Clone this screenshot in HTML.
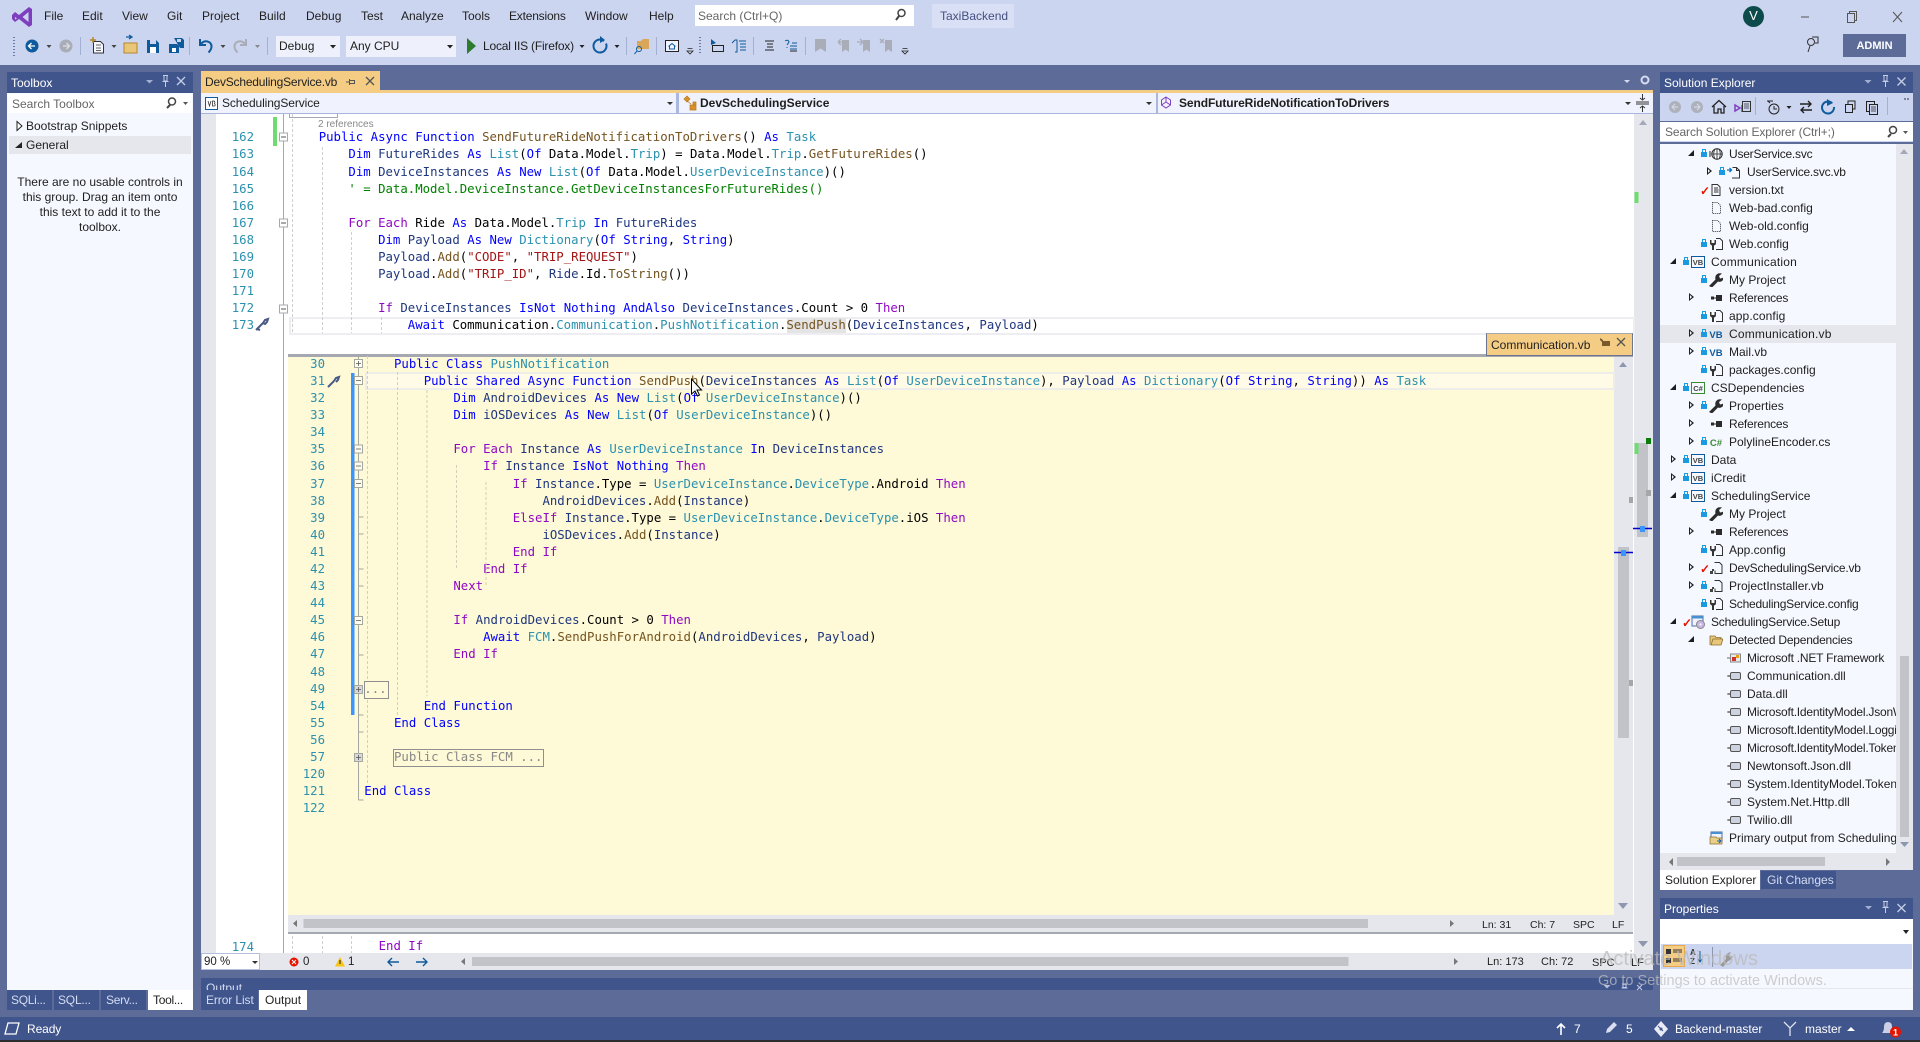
<!DOCTYPE html>
<html><head><meta charset="utf-8"><title>Visual Studio</title>
<style>
html,body{margin:0;padding:0;width:1920px;height:1042px;overflow:hidden;background:#5d6b99;font-family:"Liberation Sans",sans-serif;font-size:12px;color:#1e1e1e}
.a{position:absolute}
.t{position:absolute;white-space:nowrap;height:14px;line-height:14px}
pre{position:absolute;margin:0;font-family:"DejaVu Sans Mono",monospace;font-size:12.34px;line-height:17.1px;color:#000;white-space:pre}
pre.n{color:#2b91af;text-align:right}
.k{color:#0000ff}.c{color:#8f08c4}.y{color:#2b91af}.m{color:#74531f}.s{color:#a31515}.g{color:#008000}.v{color:#1f377f}
.w{color:#fff}
.r{position:relative;height:18px;--x:51px;white-space:nowrap}
.l1{--x:69px}.l2{--x:87px}
.r span{position:absolute;left:var(--x);top:0;line-height:18px;color:#1e1e1e}
.r span.n{letter-spacing:-.22px}
.r svg{position:absolute;left:calc(var(--x) - 20px);top:2px;width:14px;height:14px}
.r i{position:absolute;display:block}
.o{left:calc(var(--x) - 40px);top:4px;width:6px;height:9px}
.o::before{content:"";position:absolute;left:0;top:0;border-left:5px solid #1e1e1e;border-top:4.5px solid transparent;border-bottom:4.5px solid transparent}
.o::after{content:"";position:absolute;left:1px;top:2px;border-left:2.5px solid #f6f8ff;border-top:2.5px solid transparent;border-bottom:2.5px solid transparent}
.f{left:calc(var(--x) - 41px);top:5px;width:0;height:0;border-bottom:6px solid #1e1e1e;border-left:6px solid transparent}
.lk{left:calc(var(--x) - 28px);top:7px;width:6px;height:5px;background:#1a9ae0}
.lk::before{content:"";position:absolute;left:1px;top:-3px;width:2px;height:3px;border:1px solid #1a9ae0;border-bottom:0}
.ck{left:calc(var(--x) - 29px);top:4px;color:#e51400;font-size:12px;line-height:12px;font-style:normal;font-weight:bold}
.hl{background:#e6e7ed}
</style></head><body>
<svg width="0" height="0" style="position:absolute">
<symbol id="vbb" viewBox="0 0 14 14"><rect x=".5" y="1.5" width="13" height="11" fill="#f6f8ff" stroke="#0e5a9c"/><text x="7" y="10" font-size="7.5" font-weight="bold" text-anchor="middle" font-family="Liberation Sans" fill="#424242">VB</text></symbol>
<symbol id="csb" viewBox="0 0 14 14"><rect x=".5" y="1.5" width="13" height="11" fill="#f6f8ff" stroke="#388a34"/><text x="7" y="10" font-size="7.5" font-weight="bold" text-anchor="middle" font-family="Liberation Sans" fill="#424242">C#</text></symbol>
<symbol id="vb" viewBox="0 0 14 14"><text x="7" y="11" font-size="9.5" font-weight="bold" text-anchor="middle" font-family="Liberation Sans" fill="#0e5a9c">VB</text></symbol>
<symbol id="cs" viewBox="0 0 14 14"><text x="7" y="11" font-size="9.5" font-weight="bold" text-anchor="middle" font-family="Liberation Sans" fill="#388a34">C#</text></symbol>
<symbol id="cfg" viewBox="0 0 14 14"><path d="M7 1.500h4l2.500 2.500v8.500h-6.500" fill="none" stroke="#333"/><path d="M1 3v3q0 2 2 2.500v4.500h2v-4.500q2-.5 2-2.500v-3h-1.500v3h-3v-3z" fill="#333"/></symbol>
<symbol id="wr" viewBox="0 0 14 14"><path d="M0 13l6.500-6.500q-1-4 2.500-6q2-.5 4 0l-3 2.500l1 2.500l2.500-.5l1.500-2q.5 3-2 5q-2 1.500-4 .5l-6 6z" fill="#2b2b2b"/></symbol>
<symbol id="ref" viewBox="0 0 14 14"><rect x="2" y="5.500" width="3" height="3" fill="#2b2b2b"/><rect x="5" y="6.500" width="2" height="1" fill="#2b2b2b"/><rect x="7" y="4" width="6" height="6" fill="#2b2b2b"/></symbol>
<symbol id="glb" viewBox="0 0 14 14"><circle cx="8" cy="7" r="5.200" fill="none" stroke="#222"/><path d="M3 7h10M8 2v10M5.500 3q-1.500 4 0 8M10.500 3q1.500 4 0 8" fill="none" stroke="#222" stroke-width=".8"/><path d="M0 5h2M0 7h2M0 9h2" stroke="#222"/></symbol>
<symbol id="pg" viewBox="0 0 14 14"><path d="M3.500 1.500h5l3 3v8h-8z" fill="#f6f8ff" stroke="#333"/><path d="M8.500 1.500v3h3" fill="none" stroke="#333"/></symbol>
<symbol id="pgb" viewBox="0 0 14 14"><path d="M5.500 2.500h4l3 3v7.500h-7.500" fill="#f6f8ff" stroke="#333"/><path d="M0 5h4M2.500 3l2 2l-2 2" fill="none" stroke="#0e70c0" stroke-width="1.300"/><path d="M9.500 2.500v3h3" fill="none" stroke="#333"/></symbol>
<symbol id="txt" viewBox="0 0 14 14"><path d="M3 1.500h5.500l2.500 2.500v8.500h-8z" fill="#f6f8ff" stroke="#333"/><path d="M5 5h4M5 7h4.500M5 9h4.500" stroke="#333"/></symbol>
<symbol id="das" viewBox="0 0 14 14"><path d="M3.500 1.500h5l3 3v8h-8z" fill="none" stroke="#333" stroke-dasharray="1 1"/></symbol>
<symbol id="dsg" viewBox="0 0 14 14"><path d="M5.500 1.500h5l2.500 2.500v8.500h-7v-3" fill="#f6f8ff" stroke="#333"/><rect x="1" y="10" width="3" height="3" fill="#444"/><rect x="3" y="8" width="2" height="2" fill="#444"/></symbol>
<symbol id="dll" viewBox="0 0 14 14"><path d="M0 7h3" stroke="#666"/><rect x="3.500" y="3.500" width="10" height="7" rx="1.500" fill="#cdd3e0" stroke="#555"/><rect x="1" y="6" width="2" height="2" fill="#888"/></symbol>
<symbol id="net" viewBox="0 0 14 14"><path d="M0 7h3" stroke="#666"/><rect x="3.500" y="3" width="10" height="8" fill="#e8e8e8" stroke="#888"/><rect x="5" y="6" width="4" height="4" fill="#c33"/><rect x="9" y="4" width="3" height="3" fill="#e3a21a"/></symbol>
<symbol id="fld" viewBox="0 0 14 14"><path d="M1 12V3h5l1 1.500h5V6H4L2 12h10l2-6H4" fill="#e8c67a" stroke="#8a6d2d" stroke-width=".8"/></symbol>
<symbol id="set" viewBox="0 0 14 14"><rect x="1" y="1" width="11" height="10" fill="#f0f3ff" stroke="#4a6fa5"/><rect x="1" y="1" width="11" height="2.500" fill="#4a8fd0"/><circle cx="9.500" cy="9.500" r="4" fill="#c9b6e4" stroke="#888"/><circle cx="9.500" cy="9.500" r="1" fill="#fff"/></symbol>
<symbol id="pri" viewBox="0 0 14 14"><rect x="2" y="1" width="11" height="9" fill="#f0f3ff" stroke="#4a6fa5"/><rect x="2" y="1" width="11" height="2" fill="#4a8fd0"/><path d="M1 6h6l1 1h5v6H1z" fill="#e8d08a" stroke="#8a6d2d" stroke-width=".7"/><path d="M8 10h4M10 8l2 2l-2 2" stroke="#1e5fa8" fill="none"/></symbol>
</svg>

<!-- top chrome -->
<div class="a" style="left:0;top:0;width:1920px;height:65px;background:#ccd5f0"></div>
<div class="t" style="left:44px;top:9px">File</div>
<div class="t" style="left:82px;top:9px">Edit</div>
<div class="t" style="left:122px;top:9px">View</div>
<div class="t" style="left:167px;top:9px">Git</div>
<div class="t" style="left:202px;top:9px">Project</div>
<div class="t" style="left:259px;top:9px">Build</div>
<div class="t" style="left:306px;top:9px">Debug</div>
<div class="t" style="left:361px;top:9px">Test</div>
<div class="t" style="left:401px;top:9px">Analyze</div>
<div class="t" style="left:462px;top:9px">Tools</div>
<div class="t" style="left:509px;top:9px;letter-spacing:-.2px">Extensions</div>
<div class="t" style="left:585px;top:9px">Window</div>
<div class="t" style="left:649px;top:9px">Help</div>
<div class="a" style="left:695px;top:5px;width:219px;height:21px;background:#fff;border:0"></div>
<div class="t" style="left:698px;top:9px;color:#666">Search (Ctrl+Q)</div>
<div class="a" style="left:932px;top:4px;width:82px;height:24px;background:#d9e0f6"></div>
<div class="t" style="left:940px;top:9px;color:#44507e">TaxiBackend</div>
<div class="a" style="left:1743px;top:6px;width:21px;height:21px;border-radius:50%;background:#0c4a4c"></div>
<div class="t w" style="left:1743px;top:9px;width:21px;text-align:center;font-size:13px">V</div>
<div class="a" style="left:1843px;top:34px;width:63px;height:23px;background:#5d6b99"></div>
<div class="t w" style="left:1843px;top:39px;width:63px;text-align:center;font-weight:bold;font-size:11px">ADMIN</div>
<div class="a" style="left:276px;top:36px;width:64px;height:21px;background:#eef1fb"></div>
<div class="t" style="left:279px;top:39px">Debug</div>
<div class="a" style="left:346px;top:36px;width:110px;height:21px;background:#eef1fb"></div>
<div class="t" style="left:350px;top:39px">Any CPU</div>
<div class="t" style="left:483px;top:39px;letter-spacing:-.2px">Local IIS (Firefox)</div>

<!-- Toolbox -->
<div class="a" style="left:7px;top:72px;width:186px;height:21px;background:#40558c"></div>
<div class="t w" style="left:11px;top:76px">Toolbox</div>
<div class="a" style="left:7px;top:93px;width:186px;height:897px;background:#f6f8ff"></div>
<div class="a" style="left:8px;top:94px;width:184px;height:19px;background:#fff"></div>
<div class="t" style="left:12px;top:97px;color:#666">Search Toolbox</div>
<div class="a hl" style="left:9px;top:136px;width:182px;height:18px"></div>
<div class="t" style="left:26px;top:119px">Bootstrap Snippets</div>
<div class="t" style="left:26px;top:138px">General</div>
<div class="a" style="left:7px;top:175px;width:186px;text-align:center;line-height:15px;font-size:12px">There are no usable controls in<br>this group. Drag an item onto<br>this text to add it to the<br>toolbox.</div>
<div class="a" style="left:7px;top:990px;width:45px;height:20px;background:#40558c"></div>
<div class="a" style="left:54px;top:990px;width:45px;height:20px;background:#40558c"></div>
<div class="a" style="left:101px;top:990px;width:45px;height:20px;background:#40558c"></div>
<div class="a" style="left:148px;top:990px;width:45px;height:20px;background:#fff"></div>
<div class="t" style="left:11px;top:993px;color:#d5dcf2;letter-spacing:-.3px">SQLi...</div>
<div class="t" style="left:58px;top:993px;color:#d5dcf2;letter-spacing:-.2px">SQL...</div>
<div class="t" style="left:106px;top:993px;color:#d5dcf2;letter-spacing:-.3px">Serv...</div>
<div class="t" style="left:153px;top:993px;letter-spacing:-.3px">Tool...</div>

<!-- Document tab / nav -->
<div class="a" style="left:201px;top:71px;width:179px;height:19px;background:#f5cc84"></div>
<div class="t" style="left:205px;top:75px;color:#222;letter-spacing:-.2px">DevSchedulingService.vb</div>
<div class="a" style="left:201px;top:90px;width:1452px;height:3px;background:#f5cc84"></div>
<div class="a" style="left:201px;top:93px;width:1452px;height:20px;background:#f0f3fd"></div>
<div class="a" style="left:201px;top:113px;width:1452px;height:1px;background:#a9b5dc"></div>
<div class="a" style="left:676px;top:93px;width:3px;height:20px;background:#aab7de"></div>
<div class="a" style="left:1156px;top:93px;width:2px;height:20px;background:#aab7de"></div>
<div class="t" style="left:222px;top:96px;letter-spacing:-.1px">SchedulingService</div>
<div class="t" style="left:700px;top:96px;font-weight:bold">DevSchedulingService</div>
<div class="t" style="left:1179px;top:96px;font-weight:bold;letter-spacing:-.1px">SendFutureRideNotificationToDrivers</div>

<!-- Editor -->
<div class="a" style="left:201px;top:114px;width:1452px;height:839px;background:#fff"></div>
<div class="a" style="left:201px;top:114px;width:15px;height:839px;background:#e6e7ed"></div>
<div class="a" style="left:1634px;top:114px;width:19px;height:839px;background:#e6e7ed"></div>
<div class="a" style="left:272.500px;top:117px;width:4.500px;height:29px;background:#6fdc6f"></div>
<div class="a" style="left:289px;top:317px;width:1342px;height:14px;border:2px solid #eeeef2"></div>
<div class="t" style="left:318px;top:119px;font-size:10px;color:#888;height:12px;line-height:12px">2 references</div>
<div class="a" style="left:786.800px;top:318px;width:59.500px;height:15px;background:#e4e4e4"></div>
<pre class="n" style="left:216px;top:129.400px;width:38px">162
163
164
165
166
167
168
169
170
171
172
173</pre>
<pre style="left:318.700px;top:129.400px"><span class="k">Public</span> <span class="k">Async</span> <span class="k">Function</span> <span class="m">SendFutureRideNotificationToDrivers</span>() <span class="k">As</span> <span class="y">Task</span>
    <span class="k">Dim</span> <span class="v">FutureRides</span> <span class="k">As</span> <span class="y">List</span>(<span class="k">Of</span> Data.Model.<span class="y">Trip</span>) = Data.Model.<span class="y">Trip</span>.<span class="m">GetFutureRides</span>()
    <span class="k">Dim</span> <span class="v">DeviceInstances</span> <span class="k">As</span> <span class="k">New</span> <span class="y">List</span>(<span class="k">Of</span> Data.Model.<span class="y">UserDeviceInstance</span>)()
    <span class="g">' = Data.Model.DeviceInstance.GetDeviceInstancesForFutureRides()</span>

    <span class="c">For Each</span> Ride <span class="k">As</span> Data.Model.<span class="y">Trip</span> <span class="k">In</span> <span class="v">FutureRides</span>
        <span class="k">Dim</span> <span class="v">Payload</span> <span class="k">As</span> <span class="k">New</span> <span class="y">Dictionary</span>(<span class="k">Of</span> <span class="k">String</span>, <span class="k">String</span>)
        <span class="v">Payload</span>.<span class="m">Add</span>(<span class="s">"CODE"</span>, <span class="s">"TRIP_REQUEST"</span>)
        <span class="v">Payload</span>.<span class="m">Add</span>(<span class="s">"TRIP_ID"</span>, <span class="v">Ride</span>.Id.<span class="m">ToString</span>())

        <span class="c">If</span> <span class="v">DeviceInstances</span> <span class="k">IsNot</span> <span class="k">Nothing</span> <span class="k">AndAlso</span> <span class="v">DeviceInstances</span>.Count &gt; 0 <span class="c">Then</span>
            <span class="k">Await</span> Communication.<span class="y">Communication</span>.<span class="y">PushNotification</span>.<span class="m">SendPush</span>(<span class="v">DeviceInstances</span>, <span class="v">Payload</span>)</pre>

<!-- Peek -->
<div class="a" style="left:288px;top:355px;width:1326px;height:560px;background:#fef9d6"></div>
<div class="a" style="left:1614px;top:355px;width:19px;height:560px;background:#e6e7ed"></div>
<div class="a" style="left:288px;top:915px;width:1345px;height:17px;background:#e6e7ed"></div>
<div class="a" style="left:288px;top:354px;width:1345px;height:2.500px;background:#a5a8b0"></div>
<div class="a" style="left:288px;top:932px;width:1345px;height:2px;background:#a5a8b0"></div>
<div class="a" style="left:1486px;top:333px;width:145px;height:21px;background:#f5cc84;border:1px solid #6b7590;border-top-color:#a5a8b0"></div>
<div class="t" style="left:1491px;top:338px;color:#222">Communication.vb</div>
<div class="a" style="left:365px;top:372px;width:1246px;height:14px;background:#fffbe6;border:2px solid #eeedea"></div>
<div class="a" style="left:364px;top:681px;width:23px;height:16px;border:1px solid #8f8f8f"></div>
<div class="a" style="left:393px;top:749px;width:149px;height:16px;border:1px solid #8f8f8f"></div>
<pre class="n" style="left:288px;top:355.900px;width:37px;line-height:17.09px">30
31
32
33
34
35
36
37
38
39
40
41
42
43
44
45
46
47
48
49
54
55
56
57
120
121
122</pre>
<pre style="left:364.300px;top:355.900px;line-height:17.09px">    <span class="k">Public</span> <span class="k">Class</span> <span class="y">PushNotification</span>
        <span class="k">Public</span> <span class="k">Shared</span> <span class="k">Async</span> <span class="k">Function</span> <span class="m">SendPush</span>(<span class="v">DeviceInstances</span> <span class="k">As</span> <span class="y">List</span>(<span class="k">Of</span> <span class="y">UserDeviceInstance</span>), <span class="v">Payload</span> <span class="k">As</span> <span class="y">Dictionary</span>(<span class="k">Of</span> <span class="k">String</span>, <span class="k">String</span>)) <span class="k">As</span> <span class="y">Task</span>
            <span class="k">Dim</span> <span class="v">AndroidDevices</span> <span class="k">As</span> <span class="k">New</span> <span class="y">List</span>(<span class="k">Of</span> <span class="y">UserDeviceInstance</span>)()
            <span class="k">Dim</span> <span class="v">iOSDevices</span> <span class="k">As</span> <span class="k">New</span> <span class="y">List</span>(<span class="k">Of</span> <span class="y">UserDeviceInstance</span>)()

            <span class="c">For Each</span> <span class="v">Instance</span> <span class="k">As</span> <span class="y">UserDeviceInstance</span> <span class="k">In</span> <span class="v">DeviceInstances</span>
                <span class="c">If</span> <span class="v">Instance</span> <span class="k">IsNot</span> <span class="k">Nothing</span> <span class="c">Then</span>
                    <span class="c">If</span> <span class="v">Instance</span>.Type = <span class="y">UserDeviceInstance</span>.<span class="y">DeviceType</span>.Android <span class="c">Then</span>
                        <span class="v">AndroidDevices</span>.<span class="m">Add</span>(<span class="v">Instance</span>)
                    <span class="c">ElseIf</span> <span class="v">Instance</span>.Type = <span class="y">UserDeviceInstance</span>.<span class="y">DeviceType</span>.iOS <span class="c">Then</span>
                        <span class="v">iOSDevices</span>.<span class="m">Add</span>(<span class="v">Instance</span>)
                    <span class="c">End If</span>
                <span class="c">End If</span>
            <span class="c">Next</span>

            <span class="c">If</span> <span class="v">AndroidDevices</span>.Count &gt; 0 <span class="c">Then</span>
                <span class="k">Await</span> <span class="y">FCM</span>.<span class="m">SendPushForAndroid</span>(<span class="v">AndroidDevices</span>, <span class="v">Payload</span>)
            <span class="c">End If</span>

<span style="color:#888">...</span>
        <span class="k">End</span> <span class="k">Function</span>
    <span class="k">End</span> <span class="k">Class</span>

    <span style="color:#888">Public Class FCM ...</span>

<span class="k">End</span> <span class="k">Class</span>
</pre>
<div class="t" style="left:1482px;top:918px;font-size:10.500px">Ln: 31</div>
<div class="t" style="left:1530px;top:918px;font-size:10.500px">Ch: 7</div>
<div class="t" style="left:1573px;top:918px;font-size:10.500px">SPC</div>
<div class="t" style="left:1612px;top:918px;font-size:10.500px">LF</div>

<pre class="n" style="left:216px;top:939.400px;width:38px;height:14px;overflow:hidden">174</pre>
<pre style="left:378.600px;top:938.400px;height:15px;overflow:hidden"><span class="c">End If</span></pre>

<!-- editor bottom bar -->
<div class="a" style="left:201px;top:953px;width:1452px;height:17px;background:#e6e7ed"></div>
<div class="a" style="left:201px;top:953px;width:59px;height:17px;background:#fff;box-sizing:border-box;border:1px solid #b5bfdd"></div>
<div class="t" style="left:204px;top:955px;font-size:11.500px">90 %</div>
<div class="t" style="left:303px;top:955px;font-size:11.500px">0</div>
<div class="t" style="left:348px;top:955px;font-size:11.500px">1</div>
<div class="t" style="left:1487px;top:955px;font-size:11px">Ln: 173</div>
<div class="t" style="left:1541px;top:955px;font-size:11px">Ch: 72</div>
<div class="t" style="left:1592px;top:956px;font-size:11px">SPC</div>
<div class="t" style="left:1631px;top:956px;font-size:11px">LF</div>

<!-- Output strip & tabs -->
<div class="a" style="left:201px;top:978px;width:1452px;height:12px;background:#40558c;overflow:hidden"><div style="color:#d5dcf2;padding:3px 0 0 5px;line-height:14px">Output</div></div>
<div class="a" style="left:201px;top:990px;width:57px;height:20px;background:#40558c"></div>
<div class="a" style="left:259px;top:990px;width:48px;height:20px;background:#fff"></div>
<div class="t" style="left:206px;top:993px;color:#d5dcf2;letter-spacing:-.1px">Error List</div>
<div class="t" style="left:265px;top:993px">Output</div>

<!-- Solution Explorer -->
<div class="a" style="left:1660px;top:72px;width:253px;height:21px;background:#40558c"></div>
<div class="t w" style="left:1664px;top:76px">Solution Explorer</div>
<div class="a" style="left:1660px;top:93px;width:253px;height:28px;background:#ccd5f0"></div>
<div class="a" style="left:1660px;top:121px;width:253px;height:777px;background:#5d6b99"></div>
<div class="a" style="left:1660px;top:122px;width:253px;height:20px;background:#fff;border-bottom:1px solid #ccd5f0;box-sizing:border-box"></div>
<div class="t" style="left:1665px;top:125px;color:#666;letter-spacing:-.1px">Search Solution Explorer (Ctrl+;)</div>
<div class="a" style="left:1660px;top:144px;width:253px;height:726px;background:#f6f8ff"></div>
<div class="a" style="left:1896px;top:144px;width:17px;height:709px;background:#e6e7ed"></div>
<div class="a" style="left:1660px;top:853px;width:253px;height:17px;background:#e6e7ed"></div>
<div class="a" style="left:1660px;top:145px;width:236px;height:702px;overflow:hidden">
<div class="r l1"><i class="f"></i><i class="lk"></i><svg><use href="#glb"/></svg><span class="n">UserService.svc</span></div>
<div class="r l2"><i class="o"></i><i class="lk"></i><svg><use href="#pgb"/></svg><span class="n">UserService.svc.vb</span></div>
<div class="r l1"><i class="ck">✓</i><svg><use href="#txt"/></svg><span>version.txt</span></div>
<div class="r l1"><svg><use href="#das"/></svg><span>Web-bad.config</span></div>
<div class="r l1"><svg><use href="#das"/></svg><span>Web-old.config</span></div>
<div class="r l1"><i class="lk"></i><svg><use href="#cfg"/></svg><span>Web.config</span></div>
<div class="r"><i class="f"></i><i class="lk"></i><svg><use href="#vbb"/></svg><span style="letter-spacing:.2px">Communication</span></div>
<div class="r l1"><i class="lk"></i><svg><use href="#wr"/></svg><span>My Project</span></div>
<div class="r l1"><i class="o"></i><svg><use href="#ref"/></svg><span class="n">References</span></div>
<div class="r l1"><i class="lk"></i><svg><use href="#cfg"/></svg><span style="letter-spacing:.1px">app.config</span></div>
<div class="r l1 hl"><i class="o"></i><i class="lk"></i><svg><use href="#vb"/></svg><span style="letter-spacing:.2px">Communication.vb</span></div>
<div class="r l1"><i class="o"></i><i class="lk"></i><svg><use href="#vb"/></svg><span>Mail.vb</span></div>
<div class="r l1"><i class="lk"></i><svg><use href="#cfg"/></svg><span>packages.config</span></div>
<div class="r"><i class="f"></i><i class="lk"></i><svg><use href="#csb"/></svg><span>CSDependencies</span></div>
<div class="r l1"><i class="o"></i><i class="lk"></i><svg><use href="#wr"/></svg><span>Properties</span></div>
<div class="r l1"><i class="o"></i><svg><use href="#ref"/></svg><span class="n">References</span></div>
<div class="r l1"><i class="o"></i><i class="lk"></i><svg><use href="#cs"/></svg><span>PolylineEncoder.cs</span></div>
<div class="r"><i class="o"></i><i class="lk"></i><svg><use href="#vbb"/></svg><span>Data</span></div>
<div class="r"><i class="o"></i><i class="lk"></i><svg><use href="#vbb"/></svg><span>iCredit</span></div>
<div class="r"><i class="f"></i><i class="lk"></i><svg><use href="#vbb"/></svg><span>SchedulingService</span></div>
<div class="r l1"><i class="lk"></i><svg><use href="#wr"/></svg><span>My Project</span></div>
<div class="r l1"><i class="o"></i><svg><use href="#ref"/></svg><span class="n">References</span></div>
<div class="r l1"><i class="lk"></i><svg><use href="#cfg"/></svg><span>App.config</span></div>
<div class="r l1"><i class="o"></i><i class="ck">✓</i><svg><use href="#dsg"/></svg><span class="n">DevSchedulingService.vb</span></div>
<div class="r l1"><i class="o"></i><i class="lk"></i><svg><use href="#dsg"/></svg><span>ProjectInstaller.vb</span></div>
<div class="r l1"><i class="lk"></i><svg><use href="#cfg"/></svg><span class="n">SchedulingService.config</span></div>
<div class="r"><i class="f"></i><i class="ck">✓</i><svg><use href="#set"/></svg><span class="n">SchedulingService.Setup</span></div>
<div class="r l1"><i class="f"></i><svg><use href="#fld"/></svg><span class="n">Detected Dependencies</span></div>
<div class="r l2"><svg><use href="#net"/></svg><span class="n">Microsoft .NET Framework</span></div>
<div class="r l2"><svg><use href="#dll"/></svg><span>Communication.dll</span></div>
<div class="r l2"><svg><use href="#dll"/></svg><span>Data.dll</span></div>
<div class="r l2"><svg><use href="#dll"/></svg><span class="n">Microsoft.IdentityModel.JsonWebTokens.dll</span></div>
<div class="r l2"><svg><use href="#dll"/></svg><span class="n">Microsoft.IdentityModel.Logging.dll</span></div>
<div class="r l2"><svg><use href="#dll"/></svg><span class="n">Microsoft.IdentityModel.Tokens.dll</span></div>
<div class="r l2"><svg><use href="#dll"/></svg><span>Newtonsoft.Json.dll</span></div>
<div class="r l2"><svg><use href="#dll"/></svg><span>System.IdentityModel.Tokens.Jwt.dll</span></div>
<div class="r l2"><svg><use href="#dll"/></svg><span>System.Net.Http.dll</span></div>
<div class="r l2"><svg><use href="#dll"/></svg><span>Twilio.dll</span></div>
<div class="r l1"><svg><use href="#pri"/></svg><span>Primary output from SchedulingService</span></div>
</div>
<div class="a" style="left:1660px;top:870px;width:100px;height:20px;background:#fff"></div>
<div class="a" style="left:1761px;top:871px;width:75px;height:18px;background:#40558c"></div>
<div class="t" style="left:1665px;top:873px">Solution Explorer</div>
<div class="t" style="left:1767px;top:873px;color:#d5dcf2">Git Changes</div>

<!-- Properties -->
<div class="a" style="left:1660px;top:898px;width:253px;height:21px;background:#40558c"></div>
<div class="t w" style="left:1664px;top:902px">Properties</div>
<div class="a" style="left:1660px;top:919px;width:253px;height:91px;background:#f6f8ff"></div>
<div class="a" style="left:1660px;top:919px;width:253px;height:25px;background:#fff"></div>
<div class="a" style="left:1661px;top:944px;width:251px;height:25px;background:#ccd5f0"></div>
<div class="a" style="left:1663px;top:945px;width:22px;height:22px;background:#f5cc84;box-sizing:border-box;border:1px solid #e5a84a"></div>
<div class="a" style="left:1660px;top:988px;width:253px;height:1px;background:#e6e7ed"></div>

<!-- Status -->
<div class="a" style="left:0;top:1017px;width:1920px;height:23px;background:#40558c"></div>
<div class="a" style="left:0;top:1040px;width:1920px;height:2px;background:#2d2d30"></div>
<div class="t w" style="left:27px;top:1022px;letter-spacing:-.1px">Ready</div>
<div class="t w" style="left:1574px;top:1022px">7</div>
<div class="t w" style="left:1626px;top:1022px">5</div>
<div class="t w" style="left:1675px;top:1022px">Backend-master</div>
<div class="t w" style="left:1805px;top:1022px">master</div>

<!-- Icon layer -->
<svg class="a" style="left:0;top:0" width="1920" height="1042" viewBox="0 0 1920 1042" fill="none">
<!-- logo -->
<path d="M12 15l3-3 4 3L29 7l3 2v16l-3 2-10-8-4 3-3-3zM15 17v2.500l2-1.300zM22.500 17l6 5v-10z" fill="#7e3fbf" fill-rule="evenodd"/>
<!-- search icon -->
<circle cx="901.500" cy="13" r="3.500" stroke="#444" stroke-width="1.500"/><path d="M899 16l-3 4" stroke="#444" stroke-width="2"/>
<!-- window buttons -->
<path d="M1801 17h8" stroke="#555"/><path d="M1847.500 13.500h7v9h-7zM1849.500 13.500v-2h7v9h-2" stroke="#555" fill="#ccd5f0"/><path d="M1893 12l9 10M1902 12l-9 10" stroke="#555"/>
<!-- feedback -->
<circle cx="1811" cy="42" r="3.500" stroke="#333"/><path d="M1810 46l-2 6M1812 37h6v6h-3" stroke="#333"/>
<!-- toolbar gripper -->
<path d="M14 37v20" stroke="#6a7aa8" stroke-dasharray="1 2" stroke-width="2"/>
<circle cx="32" cy="46" r="6.500" fill="#0e5a9c"/><path d="M35 46h-6M31.500 43l-3 3 3 3" stroke="#fff" stroke-width="1.300"/>
<path d="M46.500 45h5l-2.500 3z" fill="#444"/>
<circle cx="66" cy="46" r="6.500" fill="#a9adb8"/><path d="M63 46h6M66.500 43l3 3-3 3" stroke="#ddd" stroke-width="1.300"/>
<path d="M80.500 37v18M189.500 37v18M267.500 37v18M626.500 37v18M656.500 37v18M753.500 37v18M805.500 37v18" stroke="#a4b0d2"/>
<path d="M93.500 41.500h7l3 3v8.500h-10z" fill="#f6f8ff" stroke="#333"/><path d="M96 45h5M96 48h5M96 50.500h5" stroke="#333" stroke-width=".7"/><path d="M90 40h6M93 37v6" stroke="#b8862c" stroke-width="1.500"/>
<path d="M111.500 45h5l-2.500 3z" fill="#444"/>
<path d="M124 43h13v10h-13z" fill="#e8c67a" stroke="#b8862c"/><path d="M126 37h5M129 35l3 2-3 2" stroke="#0e5a9c" stroke-width="1.300"/>
<path d="M147 40h9l3 3v10h-12z" fill="#0e5a9c"/><rect x="150" y="40" width="6" height="4" fill="#ccd5f0"/><rect x="150" y="47" width="6" height="6" fill="#fff"/>
<path d="M169 44h8l2 2v7h-10z M174 38h8l2 2v8h-4" fill="#0e5a9c"/><rect x="177" y="39" width="4" height="3" fill="#ccd5f0"/><rect x="172" y="48" width="4" height="4" fill="#fff"/>
<path d="M200 39v6h6M200.500 44.500q3-4 7-3t4 5q0 3-3 6" stroke="#0e5a9c" stroke-width="2"/>
<path d="M220.500 45h5l-2.500 3z" fill="#444"/>
<path d="M246 39v6h-6M245.500 44.500q-3-4-7-3t-4 5q0 3 3 6" stroke="#a9adb8" stroke-width="2"/>
<path d="M255 45h5l-2.500 3z" fill="#888"/>
<path d="M330 45h6l-3 3.500zM447 45h6l-3 3.500z" fill="#222"/>
<path d="M467 38l9 8-9 8z" fill="#2d7c2d"/>
<path d="M579.500 45h5l-2.500 3z" fill="#222"/>
<path d="M604 41q-2-1.500-4-1.500a6.500 6.500 0 1 0 6 4" stroke="#0e5a9c" stroke-width="2"/><path d="M600 36l5 4-5 3z" fill="#0e5a9c"/>
<path d="M614.500 45h5l-2.500 3z" fill="#222"/>
<path d="M637 41h4l2-2h6v10h-12z" fill="#d9a65a"/><circle cx="639" cy="49" r="2.500" stroke="#0e5a9c"/><path d="M637 51l-2.500 3" stroke="#0e5a9c"/>
<rect x="665.500" y="40.500" width="13" height="11" fill="#f0f3ff" stroke="#222"/><path d="M668.500 46.500l3.500-3 3.500 3M669.500 46v3h5v-3" stroke="#0e5a9c"/>
<path d="M687.500 48.500h5M687 51h6l-3 3z" stroke="#222" stroke-width=".8"/>
<path d="M700 37v17" stroke="#6a7aa8" stroke-dasharray="1 2" stroke-width="2"/>
<path d="M711 39l5 4-5 2z" fill="#0e5a9c"/><rect x="712.500" y="45.500" width="11" height="6" stroke="#222"/>
<path d="M732 43l3-3h2v12h-2M739 41h7M740 44h6M740 47h6M740 50h6" stroke="#0e5a9c"/>
<path d="M765 41h9M767 44h6M767 47h6M765 50h9" stroke="#222"/>
<path d="M785 41q3-2 4 1l-2 3M792 43h5M790 46h7M790 49h7M787 47v1" stroke="#0e5a9c"/><path d="M790 51h7" stroke="#222"/>
<path d="M815 39h11v13l-5.500-3.500-5.500 3.500zM842 40h7v12l-3.500-2.500-3.500 2.500zM863 40h7v12l-3.500-2.500-3.500 2.500zM885 40h7v12l-3.500-2.500-3.500 2.500z" fill="#a8adb8"/>
<path d="M838 42l3-3M838 42l3 3M838 42h5M860 39l3 3-3 3M857 42h5M880 39l4 4M884 39l-4 4" stroke="#a8adb8" stroke-width="1.300"/>
<path d="M902.500 48.500h5M902 51h6l-3 3z" stroke="#222" stroke-width=".8"/>
<!-- toolbox panel glyphs -->
<path d="M146 80h7l-3.500 3.500z" fill="#a3afd2"/><path d="M163 75.500h5M164 75.500v5.500h3v-5.500M162.500 81.500h6M165.500 82v5" stroke="#c5cee8"/><path d="M177 77l8 8M185 77l-8 8" stroke="#c5cee8" stroke-width="1.300"/>
<circle cx="172" cy="101.500" r="3.500" stroke="#444" stroke-width="1.500"/><path d="M170 105l-3 3" stroke="#444" stroke-width="2"/><path d="M183 102h5l-2.500 3z" fill="#555"/>
<path d="M17 121.500l5 4.500-5 4.500z" fill="#fff" stroke="#222"/><path d="M22 142v6h-7z" fill="#222"/>
<!-- doc tab -->
<path d="M346 82h3M349.500 79v6M349.500 80.500h5v3h-5" stroke="#555"/><path d="M366 77l8 8M374 77l-8 8" stroke="#555" stroke-width="1.300"/>
<path d="M1624 80h6l-3 3z" fill="#d6dcf0"/><circle cx="1645" cy="80" r="3.500" stroke="#d6dcf0" stroke-width="2"/>
<!-- nav -->
<rect x="205.500" y="97.500" width="12" height="12" fill="#fff" stroke="#0e5a9c"/><path d="M208 101l1.500 5 1.500-5M212.500 101v5h2q1.500-1 0-2.500q1-1.500-.5-2.500z" stroke="#333" stroke-width=".8"/>
<path d="M667 102h6l-3 3zM1146 102h6l-3 3zM1625 102h6l-3 3z" fill="#333"/>
<path d="M684 99l3-3 3 3-3 3zM693 102h3v3h-3zM690 105h6v5h-6zM687 101l4 3" fill="#d9922a" stroke="#b87820" stroke-width=".7"/>
<path d="M1166 97l4.500 3v5l-4.500 3-4.500-3v-5z M1166 97v5l4.500 3M1166 102l-4.500 3" stroke="#7e3fbf"/>
<path d="M1642.500 94v6M1636 102h13M1636 104h13M1642.500 106v6M1640 98l2.500 2 2.500-2M1640 108l2.500-2 2.500 2" stroke="#333"/>
<!-- editor gutter -->
<path d="M283.500 114v839" stroke="#a5a8b0"/>
<path d="M289.500 114v3.500h48v-3.500" stroke="#a5a8b0"/>
<g fill="#fff" stroke="#a5a8b0"><rect x="279.500" y="133" width="8" height="8"/><rect x="279.500" y="219" width="8" height="8"/><rect x="279.500" y="305" width="8" height="8"/></g>
<path d="M281 137h5M281 223h5M281 309h5" stroke="#555"/>
<g stroke="#cfcfcf" stroke-dasharray="3 2"><path d="M292.500 114v219M322.500 147v186M351.500 232v101M381.500 317v16M292.500 936v17M322.500 936v17M351.500 936v17"/></g>
<!-- wrench 173 / 31 -->
<path d="M256 330l7-7M263 323l2-3 3-1-1 3-2 2zM257 329l3 1" stroke="#4a5a85" stroke-width="2"/>
<path d="M328 387l6-6M334 381l2-3 3-1-1 3-2 2" stroke="#4a5a85" stroke-width="2"/>
<!-- peek gutter -->
<rect x="351" y="373" width="3.500" height="342" fill="#3a96ff"/>
<path d="M358.500 356v444M358.500 715h5M358.500 732h5M358.500 800h5M358.500 569h5M358.500 586h5M358.500 655h5M358.500 534h5M358.500 517h5" stroke="#a5a89f"/>
<g fill="#fffdf0" stroke="#a5a89f"><rect x="354.500" y="359.500" width="8" height="8"/><rect x="354.500" y="376.500" width="8" height="8"/><rect x="354.500" y="445" width="8" height="8"/><rect x="354.500" y="462" width="8" height="8"/><rect x="354.500" y="479.500" width="8" height="8"/><rect x="354.500" y="616.500" width="8" height="8"/></g>
<g fill="#d8d8d8" stroke="#a5a89f"><rect x="354.500" y="685.500" width="8" height="8"/><rect x="354.500" y="753.500" width="8" height="8"/></g>
<path d="M356 363.500h5M358.500 361v5M356 380.500h5M356 449h5M356 466h5M356 483.500h5M356 620.500h5M356 689.500h5M358.500 687v5M356 757.500h5M358.500 755v5" stroke="#555" stroke-width=".8"/>
<g stroke="#d5d0b5" stroke-dasharray="3 2"><path d="M367.500 356v324M367.500 700v85M397.500 372v343M427 390v306M456.500 465v104M486 482v104"/></g>
<!-- peek tab icons -->
<path d="M1600 338l3 2v1h7v5h-8v-4l-2-2z" fill="#7a5a2a"/><path d="M1617 338l8 8M1625 338l-8 8" stroke="#555" stroke-width="1.300"/>
<!-- peek scrollbar -->
<path d="M1619 367l4-5 4 5z" fill="#8f96b0"/><path d="M1618 903l5 6 5-6z" fill="#8f96b0"/>
<rect x="1618" y="547" width="11" height="191" fill="#c2c3c9"/>
<rect x="1629" y="497" width="4" height="6" fill="#a6a6a6"/><rect x="1629" y="680" width="4" height="6" fill="#a6a6a6"/>
<path d="M1614 552.500h19" stroke="#0000c8" stroke-width="1.500"/><rect x="1621" y="550" width="5" height="6" fill="#3a96ff"/>
<!-- main scrollbar -->
<path d="M1639 125l4-5 4 5z" fill="#a5a8b8"/><path d="M1638 941l5 6 5-6z" fill="#8f96b0"/>
<rect x="1634.500" y="192" width="4" height="11" fill="#6fdc6f"/>
<rect x="1637" y="443" width="11" height="94" fill="#c2c3c9"/>
<rect x="1634.500" y="443" width="4" height="11" fill="#6fdc6f"/>
<rect x="1646" y="438" width="5" height="6" fill="#0a7d0a"/><rect x="1646" y="490" width="5" height="6" fill="#a6a6a6"/>
<path d="M1633 528.500h19" stroke="#0000c8" stroke-width="1.500"/><rect x="1640" y="526" width="5" height="6" fill="#3a96ff"/>
<!-- hscrolls -->
<rect x="303.500" y="919" width="1064.500" height="9" fill="#c2c3c9"/><path d="M297 920v7l-4-3.500zM1450 920v7l4-3.500z" fill="#777"/>
<rect x="472" y="957" width="876.500" height="9" fill="#c2c3c9"/><path d="M465 958v7l-4-3.500zM1454 958v7l4-3.500z" fill="#777"/>
<!-- errors -->
<path d="M252 961h6l-3 3z" fill="#333"/>
<circle cx="294" cy="962" r="4.500" fill="#e51400"/><path d="M292 960l4 4M296 960l-4 4" stroke="#fff"/>
<path d="M340 957l5 9.500h-10z" fill="#f5c518"/><path d="M340 960v4" stroke="#222"/>
<path d="M399 962h-11M392 958l-4 4 4 4M416 962h11M423 958l4 4-4 4" stroke="#0e5a9c" stroke-width="1.400"/>
<!-- SE glyphs -->
<path d="M1864.500 80h7l-3.500 3.500z" fill="#a3afd2"/><path d="M1883 75.500h5M1884 75.500v5.500h3v-5.500M1882.500 81.500h6M1885.500 82v5" stroke="#c5cee8"/><path d="M1897.500 77.500l8 8M1905.500 77.500l-8 8" stroke="#c5cee8" stroke-width="1.300"/>
<circle cx="1675" cy="107" r="6" fill="#adb1bc"/><circle cx="1697" cy="107" r="6" fill="#adb1bc"/>
<path d="M1672 107h6M1675 104l-3 3 3 3M1694 107h6M1697 104l3 3-3 3" stroke="#d5d8e4" stroke-width="1.200"/>
<path d="M1712 107l7-6.500 7 6.500M1714 106v7h4v-4h3v4h3v-7" stroke="#222" stroke-width="1.300"/>
<path d="M1735 105l5 3-5 3zM1742 105v7" stroke="#7e3fbf" stroke-width="1.500"/><rect x="1742.500" y="101.500" width="8" height="10" fill="#ccd5f0" stroke="#333"/><path d="M1744 104h5M1744 106h5M1744 108h5" stroke="#333" stroke-width=".8"/>
<path d="M1755.500 97v18M1887.500 97v18" stroke="#a4b0d2"/>
<circle cx="1774" cy="109" r="5" stroke="#222"/><path d="M1774 106v3h3M1767 101h6M1768 101l2 2" stroke="#222"/><path d="M1786.500 106h5l-2.500 3z" fill="#222"/>
<path d="M1800 104h11M1808 101l3 3-3 3M1812 110h-11M1804 107l-3 3 3 3" stroke="#222" stroke-width="1.400"/>
<path d="M1832 103a6 6 0 1 0 2 4" stroke="#0e5a9c" stroke-width="2"/><path d="M1827 99l6 4-6 3z" fill="#0e5a9c"/>
<rect x="1845.500" y="104.500" width="7" height="8" stroke="#222"/><path d="M1848 104v-3h7v8h-2" stroke="#222"/>
<rect x="1866.500" y="101.500" width="8" height="10" stroke="#222"/><rect x="1869.500" y="104.500" width="8" height="10" fill="#ccd5f0" stroke="#222"/><path d="M1871 107h5M1871 109h5M1871 111h5" stroke="#222" stroke-width=".8"/>
<path d="M1905 98v2M1908 98v2" stroke="#333"/>
<circle cx="1893" cy="130" r="3.500" stroke="#444" stroke-width="1.500"/><path d="M1891 134l-3 3" stroke="#444" stroke-width="2"/><path d="M1903 131h5l-2.500 3z" fill="#555"/>
<path d="M1900 154l4-5 4 5z" fill="#a5a8b8"/><rect x="1900" y="656" width="9" height="181" fill="#c2c3c9"/><path d="M1900 842l4.500 5 4.500-5z" fill="#8f96b0"/>
<rect x="1677" y="857" width="148" height="9" fill="#c2c3c9"/><path d="M1673 858v8l-4-4zM1886 858v8l4-4z" fill="#777"/>
<!-- properties glyphs -->
<path d="M1865 906h7l-3.500 3.500z" fill="#a3afd2"/><path d="M1883 901.500h5M1884 901.500v5.500h3v-5.500M1882.500 907.500h6M1885.500 908v5" stroke="#c5cee8"/><path d="M1897.500 904l8 8M1905.500 904l-8 8" stroke="#c5cee8" stroke-width="1.300"/>
<path d="M1903 930h6l-3 4z" fill="#222"/>
<rect x="1666" y="949" width="5" height="5" fill="#333"/><rect x="1666" y="958" width="5" height="5" fill="#333"/><path d="M1673 950h9M1673 952h9M1673 959h9M1673 961h9" stroke="#333"/>
<text x="1690" y="955" font-size="8" font-weight="bold" font-family="Liberation Sans" fill="#333">A</text><text x="1690" y="964" font-size="8" font-weight="bold" font-family="Liberation Sans" fill="#333">Z</text><path d="M1700 951v11M1698 959l2 3 2-3" stroke="#0e5a9c"/>
<path d="M1712.500 947v20" stroke="#8f96b0"/><path d="M1720 965l6-6q-1-4 2-6l3-1-2 3 1 2 3-1q-1 4-5 5l-5 6z" fill="#9a9a9a"/>
<!-- output pane glyphs -->
<path d="M1603.500 985h7l-3.500 3.500z" fill="#b9c0da"/><path d="M1622 984h5M1623 984v3.500h3V984M1621.500 988h6" stroke="#c5cee8"/><path d="M1637 985l5 5M1642 985l-5 5" stroke="#c5cee8"/>
<!-- status glyphs -->
<path d="M5 1034l3-11h11l-3 11z" stroke="#fff" stroke-width="1.300"/>
<path d="M1561 1035v-11M1557 1028l4-4 4 4" stroke="#fff" stroke-width="1.600"/>
<path d="M1606 1033l1-4 7-7 3 3-7 7z" fill="#d8ddf0"/>
<path d="M1661 1021l7 8-7 8-7-8z" fill="#e8ebf5"/><path d="M1658 1026l5 5" stroke="#40558c"/><circle cx="1661" cy="1029" r="1.500" fill="#40558c"/>
<path d="M1784 1022l6 6 6-6M1790 1028v8" stroke="#dfe3f2" stroke-width="1.300"/>
<path d="M1847 1031l4-4 4 4z" fill="#fff"/>
<path d="M1882 1033q2-2 2-6 0-5 4-5t4 5q0 4 2 6z" fill="#c9d0e8"/>
<circle cx="1895.500" cy="1032" r="5.500" fill="#e51400"/><text x="1895.500" y="1035.500" font-size="9" font-weight="bold" text-anchor="middle" font-family="Liberation Sans" fill="#fff">1</text>
<!-- cursor -->
<path d="M691.500 379v15l3.500-3 2.500 5 2-1-2.500-5h4.500z" fill="#fff" stroke="#000"/>
</svg>
<!-- watermark -->
<div class="t" style="left:1600px;top:949px;height:20px;line-height:20px;font-size:20px;color:rgba(185,185,185,.75)">Activate Windows</div>
<div class="t" style="left:1598px;top:974px;font-size:14.500px;color:rgba(190,190,190,.75)">Go to Settings to activate Windows.</div>
</body></html>
